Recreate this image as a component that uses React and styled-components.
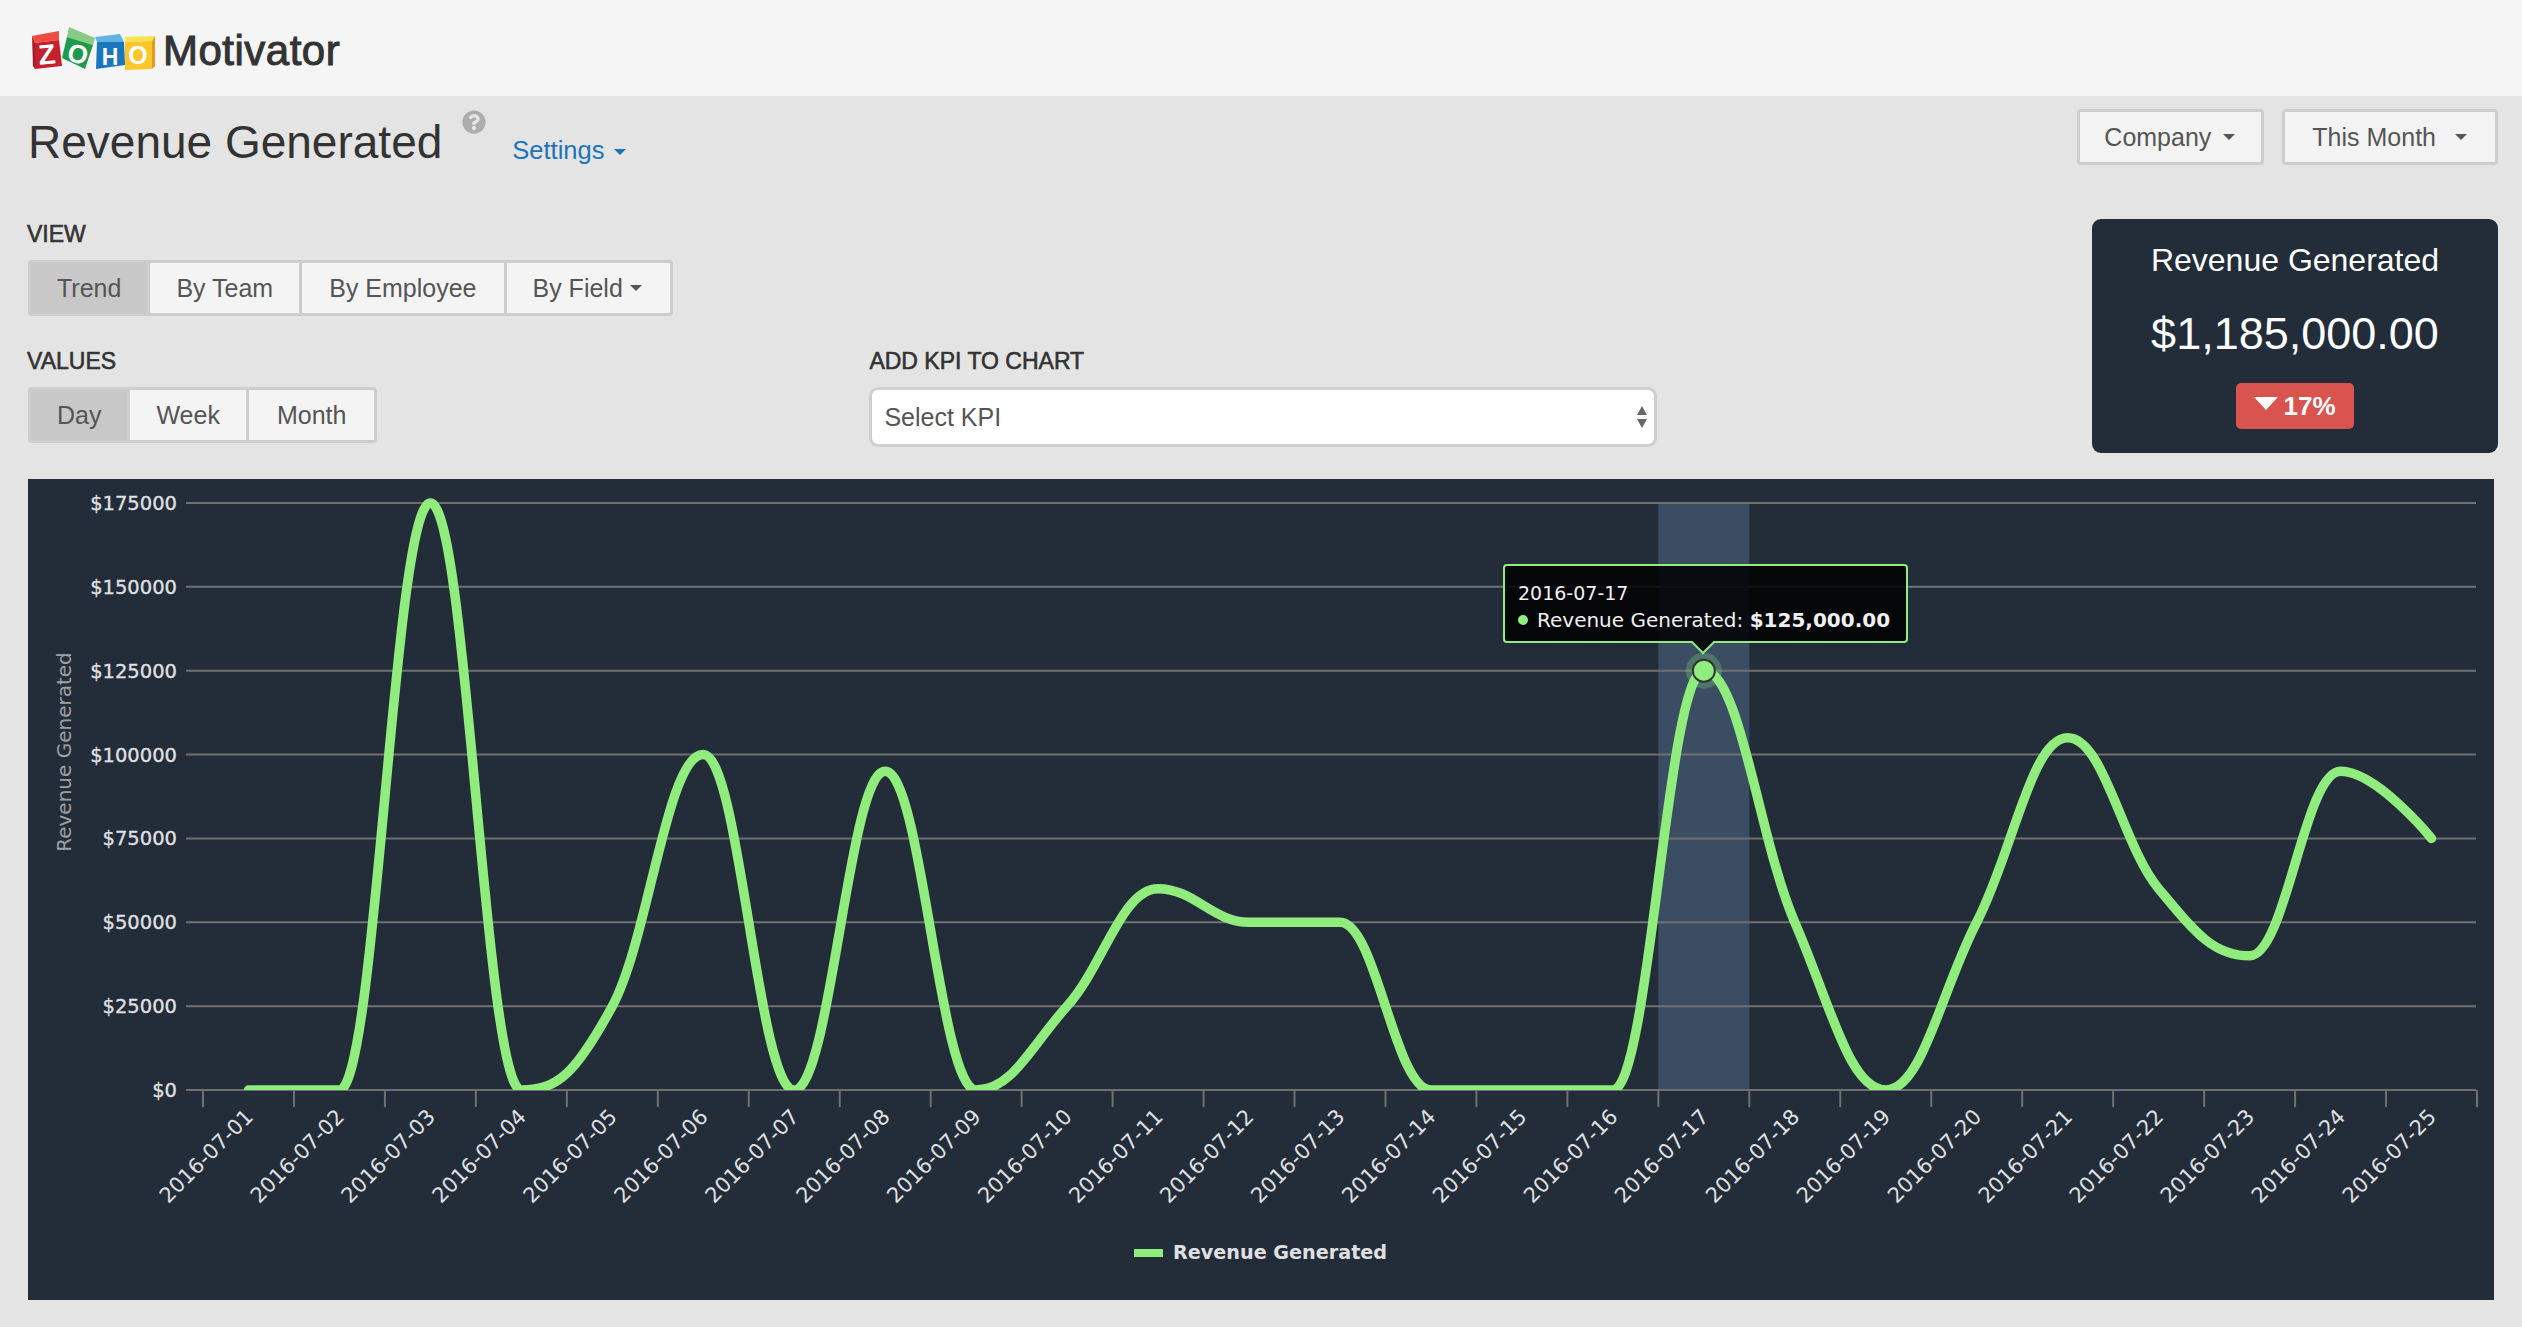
import React from 'react';
import styled, { createGlobalStyle } from 'styled-components';
import { FaQuestionCircle } from 'react-icons/fa';

const GlobalStyle = createGlobalStyle`
	html, body {
		margin: 0;
		padding: 0;
		background-color: #e4e4e4;
		font-family: "Liberation Sans", Arial, sans-serif;
	}
	* {
		box-sizing: border-box;
	}
`;

const Header = styled.div`
	height: 96px;
	background-color: #f5f5f5;
	display: flex;
	align-items: center;
	padding-left: 30px;
`;

const Brand = styled.span`
	font-size: 42px;
	letter-spacing: 0.5px;
	color: #333;
	margin: 5px 0 0 7px;
	-webkit-text-stroke: 1px #333;
`;

const Main = styled.div`
	padding: 13px 24px 27px 28px;
`;

const TopArea = styled.div`
	display: flex;
	justify-content: space-between;
	height: 357px;
`;

const LeftColumn = styled.div`
	display: flex;
	flex-direction: column;
`;

const RightColumn = styled.div`
	display: flex;
	flex-direction: column;
	align-items: flex-end;
`;

const TitleRow = styled.div`
	display: flex;
	height: 96px;
`;

const Title = styled.h1`
	font-size: 46px;
	font-weight: normal;
	line-height: 56px;
	margin: 5px 0 0;
	color: #333;
`;

const Help = styled.span`
	font-size: 24px;
	line-height: 24px;
	height: 24px;
	color: #adadad;
	margin: 1px 0 0 20px;
`;

const SettingsLink = styled.a`
	font-size: 25.5px;
	line-height: 30px;
	color: #1e74b8;
	margin: 26px 0 0 26px;
`;

const Caret = styled.span`
	display: inline-block;
	width: 0;
	height: 0;
	border-left: 6px solid transparent;
	border-right: 6px solid transparent;
	border-top: 6px solid ${(p) => p.color || '#555'};
	margin-left: ${(p) => p.gap || 12}px;
	vertical-align: middle;
`;

const FieldLabel = styled.div`
	font-size: 23px;
	line-height: 28px;
	height: 26px;
	color: #333;
	-webkit-text-stroke: 0.6px #333;
	margin-left: -1px;
`;

const ViewBlock = styled.div`
	margin-top: 15px;
`;

const ButtonGroup = styled.div`
	display: inline-flex;
	height: 56px;
	margin-top: 14px;
	border: 3px solid #cdcdcd;
	border-radius: 4px;
	background-color: #f4f4f4;
`;

const GroupButton = styled.div`
	display: flex;
	align-items: center;
	padding: 0 ${(p) => p.right || p.pad || 26}px 0 ${(p) => p.pad || 26}px;
	font-size: 25px;
	color: #555;
	background-color: ${(p) => (p.active ? '#c8c8c8' : 'transparent')};
	border-right: ${(p) => (p.last ? 'none' : '3px solid #cdcdcd')};
`;

const ValuesRow = styled.div`
	display: flex;
	margin-top: 31px;
`;

const KpiBlock = styled.div`
	margin-left: 492px;
`;

const KpiLabel = styled(FieldLabel)`
	margin-left: 0;
`;

const SelectBox = styled.div`
	position: relative;
	width: 788px;
	height: 60px;
	margin-top: 14px;
`;

const KpiSelect = styled.select`
	appearance: none;
	width: 100%;
	height: 100%;
	border: 3px solid #cfcfcf;
	border-radius: 9px;
	background-color: #fff;
	padding: 0 12px;
	font-family: inherit;
	font-size: 25px;
	color: #555;
`;

const SelectArrows = styled.svg`
	position: absolute;
	right: 9px;
	top: 18px;
	width: 12px;
	height: 24px;
`;

const Dropdowns = styled.div`
	display: flex;
	gap: 18px;
`;

const DropdownButton = styled.div`
	display: flex;
	align-items: center;
	height: 56px;
	padding: ${(p) => (p.wide ? '0 28px 0 27px' : '0 26px 0 24px')};
	font-size: 25px;
	color: #555;
	background-color: #f3f3f3;
	border: 3px solid #cdcdcd;
	border-radius: 4px;
`;

const KpiCard = styled.div`
	width: 406px;
	height: 234px;
	margin-top: 54px;
	background-color: #222d39;
	border-radius: 9px;
	color: #fff;
	text-align: center;
	padding-top: 21px;
`;

const KpiTitle = styled.div`
	font-size: 32px;
	line-height: 40px;
`;

const KpiValue = styled.div`
	font-size: 45px;
	line-height: 52px;
	margin-top: 28px;
`;

const Badge = styled.div`
	display: inline-flex;
	align-items: center;
	justify-content: center;
	width: 118px;
	height: 46px;
	margin-top: 23px;
	background-color: #d9534f;
	border-radius: 5px;
	font-size: 26px;
	font-weight: bold;
`;

const DownArrow = styled.span`
	width: 0;
	height: 0;
	border-left: 12px solid transparent;
	border-right: 12px solid transparent;
	border-top: 13px solid #fff;
	margin: 0 5px 5px 0;
`;

const ChartPanel = styled.div`
	height: 821px;
	margin-right: 4px;
	margin-top: 13px;
	background-color: #222d39;
`;

const ChartSvg = styled.svg`
	display: block;
	width: 100%;
	height: 100%;
	font-family: "DejaVu Sans", sans-serif;
`;

const YLabel = styled.text`
	font-size: 19.5px;
	fill: #e0e0e3;
	stroke: #e0e0e3;
	stroke-width: 0.3px;
	text-anchor: end;
`;

const XLabel = styled.text`
	font-size: 21px;
	fill: #e0e0e3;
	text-anchor: end;
`;

const YTitle = styled.text`
	font-size: 20px;
	fill: #a0a0a3;
	text-anchor: middle;
`;

const LegendText = styled.text`
	font-size: 19.2px;
	font-weight: bold;
	fill: #e0e0e3;
`;

const TipText = styled.text`
	font-size: ${(p) => p.size || 20}px;
	fill: #f0f0f0;
`;

const LINE = '#90ed7d';
const GRID = '#707073';

const data = [
	0, 0, 175000, 0, 25000, 100000, 0, 95000, 0, 25000, 60000, 50000, 50000,
	0, 0, 0, 125000, 50000, 0, 50000, 105000, 60000, 40000, 95000, 75000,
];

// plot area, in page pixels (the svg viewBox starts at the panel corner)
const plot = { left: 203, right: 2477, top: 503, bottom: 1090, max: 175000 };
const step = (plot.right - plot.left) / data.length;
const px = (i) => plot.left + step * (i + 0.5);
const py = (v) => plot.bottom - (v / plot.max) * (plot.bottom - plot.top);

const pad = (n) => (n < 10 ? '0' + n : '' + n);
const dates = data.map((_, i) => `2016-07-${pad(i + 1)}`);

// same control points as a highcharts spline
const controls = (pts, i) => {
	const [x, y] = pts[i];
	const prev = pts[i - 1];
	const next = pts[i + 1];
	if (!prev || !next) return { lx: x, ly: y, rx: x, ry: y };
	const lx = (1.5 * x + prev[0]) / 2.5;
	let ly = (1.5 * y + prev[1]) / 2.5;
	const rx = (1.5 * x + next[0]) / 2.5;
	let ry = (1.5 * y + next[1]) / 2.5;
	const correction = ((ry - ly) * (rx - x)) / (rx - lx) + y - ry;
	ly += correction;
	ry += correction;
	if (ly > prev[1] && ly > y) {
		ly = Math.max(prev[1], y);
		ry = 2 * y - ly;
	} else if (ly < prev[1] && ly < y) {
		ly = Math.min(prev[1], y);
		ry = 2 * y - ly;
	}
	if (ry > next[1] && ry > y) {
		ry = Math.max(next[1], y);
		ly = 2 * y - ry;
	} else if (ry < next[1] && ry < y) {
		ry = Math.min(next[1], y);
		ly = 2 * y - ry;
	}
	return { lx, ly, rx, ry };
};

const splinePath = () => {
	const pts = data.map((v, i) => [px(i), py(v)]);
	let d = `M ${pts[0][0]} ${pts[0][1]}`;
	for (let i = 1; i < pts.length; i++) {
		const a = controls(pts, i - 1);
		const b = controls(pts, i);
		d += ` C ${a.rx} ${a.ry} ${b.lx} ${b.ly} ${pts[i][0]} ${pts[i][1]}`;
	}
	return d;
};

const ZohoLogo = () => (
	<svg width="126" height="46" viewBox="30 25 126 46">
		<polygon points="32,36 59,31 59,40 35,43" fill="#ef4d3f" />
		<polygon points="32,36 35,43 35,69 33,66" fill="#a81c28" />
		<polygon points="35,43 59,40 62,66 35,69" fill="#c4202f" />
		<polygon points="69,27 95,38 93,45 67,37" fill="#86cb86" />
		<polygon points="67,37 93,45 85,69 62,58" fill="#1f9a4b" />
		<polygon points="95,37 120,34 124,42 97,42" fill="#62b3e2" />
		<polygon points="97,42 124,42 125,65 96,69" fill="#1a77bd" />
		<polygon points="125,37 155,36 152,41 125,42" fill="#f6e44c" />
		<polygon points="125,42 152,41 152,69 125,70" fill="#fcc52b" />
		<polygon points="152,41 155,36 155,66 152,69" fill="#e39a1e" />
		<text x="47" y="64" fontFamily="Liberation Sans" fontWeight="bold" fontSize="28" fill="#fff" textAnchor="middle" transform="rotate(-5 47 54)">Z</text>
		<text x="78" y="63" fontFamily="Liberation Sans" fontWeight="bold" fontSize="26" fill="#fff" textAnchor="middle" transform="rotate(18 78 54)">O</text>
		<text x="110" y="65" fontFamily="Liberation Sans" fontWeight="bold" fontSize="23" fill="#fff" textAnchor="middle">H</text>
		<text x="138" y="64" fontFamily="Liberation Sans" fontWeight="bold" fontSize="25" fill="#fff" textAnchor="middle">O</text>
	</svg>
);

const Chart = () => {
	const ticks = [];
	for (let i = 0; i <= data.length; i++) ticks.push(plot.left + step * i);
	const yTicks = [0, 25000, 50000, 75000, 100000, 125000, 150000, 175000];
	const hx = px(16);
	const hy = py(125000);

	return (
		<ChartSvg viewBox="28 479 2466 821">
			<defs>
				<clipPath id="plotClip">
					<rect x="186" y="480" width="2291" height={plot.bottom - 480} />
				</clipPath>
			</defs>

			<rect x={plot.left + step * 16} y={plot.top} width={step} height={plot.bottom - plot.top} fill="#3a4d63" />

			{yTicks.map((v) => (
				<g key={v}>
					<line x1="186" x2="2476" y1={py(v)} y2={py(v)} stroke={GRID} strokeWidth="2" />
					<YLabel x="177" y={py(v) + 7}>${v}</YLabel>
				</g>
			))}

			{ticks.map((x) => (
				<line key={x} x1={x} x2={x} y1={plot.bottom} y2="1107" stroke={GRID} strokeWidth="2" />
			))}

			{dates.map((d, i) => (
				<XLabel key={d} x={px(i) + 6} y="1118" transform={`rotate(-45 ${px(i) + 6} 1118)`}>{d}</XLabel>
			))}

			<YTitle x="71" y="752" transform="rotate(-90 71 752)">Revenue Generated</YTitle>

			<path d={splinePath()} fill="none" stroke={LINE} strokeWidth="9.5" strokeLinecap="round" strokeLinejoin="round" clipPath="url(#plotClip)" />

			<circle cx={hx} cy={hy} r="18" fill={LINE} opacity="0.25" />
			<circle cx={hx} cy={hy} r="11" fill={LINE} stroke="#333" strokeWidth="2" />

			<path
				d="M1507 565 H1904 Q1907 565 1907 568 V639 Q1907 642 1904 642 H1714 L1703 653 L1692 642 H1507 Q1504 642 1504 639 V568 Q1504 565 1507 565 Z"
				fill="rgba(0,0,0,0.85)"
				stroke={LINE}
				strokeWidth="2"
			/>
			<TipText x="1518" y="600" size="19">2016-07-17</TipText>
			<circle cx="1523" cy="620" r="5" fill={LINE} />
			<TipText x="1537" y="627">
				Revenue Generated: <tspan fontWeight="bold">$125,000.00</tspan>
			</TipText>

			<rect x="1134" y="1249" width="29" height="8" fill={LINE} />
			<LegendText x="1173" y="1259">Revenue Generated</LegendText>
		</ChartSvg>
	);
};

const App = () => (
	<>
		<GlobalStyle />
		<Header>
			<ZohoLogo />
			<Brand>Motivator</Brand>
		</Header>
		<Main>
			<TopArea>
				<LeftColumn>
					<TitleRow>
						<Title>Revenue Generated</Title>
						<Help><FaQuestionCircle /></Help>
						<SettingsLink>Settings<Caret color="#1e74b8" gap={10} /></SettingsLink>
					</TitleRow>
					<ViewBlock>
						<FieldLabel>VIEW</FieldLabel>
						<ButtonGroup>
							<GroupButton active>Trend</GroupButton>
							<GroupButton>By Team</GroupButton>
							<GroupButton pad={27}>By Employee</GroupButton>
							<GroupButton last pad={26} right={28}>By Field<Caret gap={7} /></GroupButton>
						</ButtonGroup>
					</ViewBlock>
					<ValuesRow>
						<div>
							<FieldLabel>VALUES</FieldLabel>
							<ButtonGroup>
								<GroupButton active pad={26}>Day</GroupButton>
								<GroupButton>Week</GroupButton>
								<GroupButton last pad={28}>Month</GroupButton>
							</ButtonGroup>
						</div>
						<KpiBlock>
							<KpiLabel>ADD KPI TO CHART</KpiLabel>
							<SelectBox>
								<KpiSelect defaultValue="">
									<option value="">Select KPI</option>
								</KpiSelect>
								<SelectArrows viewBox="0 0 12 24">
									<path d="M6 1 L11 10 H1 Z M6 23 L11 14 H1 Z" fill="#666" />
								</SelectArrows>
							</SelectBox>
						</KpiBlock>
					</ValuesRow>
				</LeftColumn>
				<RightColumn>
					<Dropdowns>
						<DropdownButton>Company<Caret /></DropdownButton>
						<DropdownButton wide>This Month<Caret gap={19} /></DropdownButton>
					</Dropdowns>
					<KpiCard>
						<KpiTitle>Revenue Generated</KpiTitle>
						<KpiValue>$1,185,000.00</KpiValue>
						<Badge><DownArrow />17%</Badge>
					</KpiCard>
				</RightColumn>
			</TopArea>
			<ChartPanel>
				<Chart />
			</ChartPanel>
		</Main>
	</>
);

export default App;
